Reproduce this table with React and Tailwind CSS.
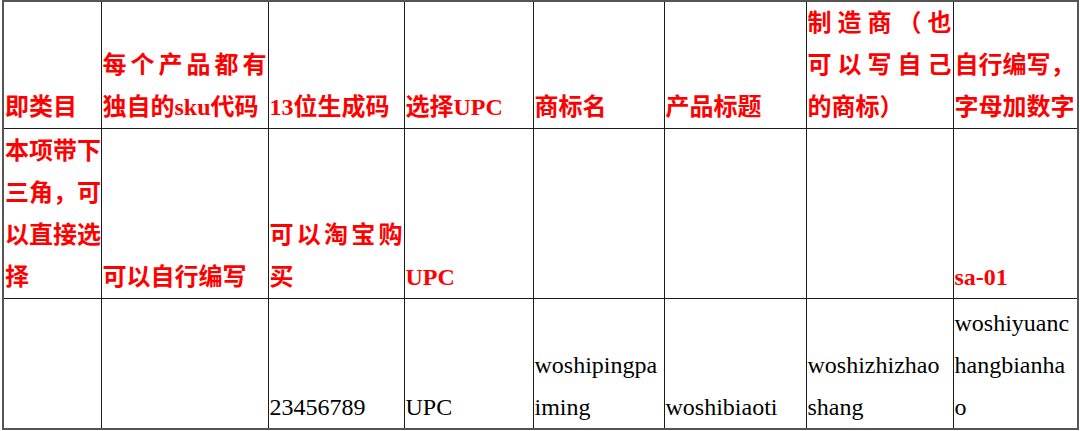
import React from 'react';

const FONT = "font-['Liberation_Serif','Noto_Sans_CJK_SC',serif]";

// one line of cell text; "spread" lines are justified edge to edge like the source doc
function Line({ children, spread = false }) {
  return (
    <div className={`whitespace-nowrap ${spread ? 'text-justify [text-align-last:justify]' : ''}`}>
      {children}
    </div>
  );
}

function Cell({ children, red = false }) {
  return (
    <td
      className={`border-[1.5px] border-[#1b1b1b] align-bottom p-0 pl-[1px] pr-[1px] overflow-hidden ${red ? 'text-[#ff0000] font-semibold' : 'text-black'}`}
    >
      {children}
    </td>
  );
}

export default function App() {
  return (
    <div className={`w-[1080px] h-[431px] bg-white ${FONT} text-[24px] leading-[42px]`}>
      <div className="pl-[2px]">
        <table className="table-fixed border-collapse border-2 border-[#555555] w-[1075px]">
          <colgroup>
            <col className="w-[98px]" />
            <col className="w-[167px]" />
            <col className="w-[136px]" />
            <col className="w-[129px]" />
            <col className="w-[131px]" />
            <col className="w-[142px]" />
            <col className="w-[147px]" />
            <col className="w-[125px]" />
          </colgroup>
          <tbody>
            <tr className="h-[127px]">
              <Cell red>
                <Line>即类目</Line>
              </Cell>
              <Cell red>
                <Line spread>每个产品都有</Line>
                <Line>独自的sku代码</Line>
              </Cell>
              <Cell red>
                <Line>13位生成码</Line>
              </Cell>
              <Cell red>
                <Line>选择UPC</Line>
              </Cell>
              <Cell red>
                <Line>商标名</Line>
              </Cell>
              <Cell red>
                <Line>产品标题</Line>
              </Cell>
              <Cell red>
                <Line spread>制造商（也</Line>
                <Line spread>可以写自己</Line>
                <Line>的商标）</Line>
              </Cell>
              <Cell red>
                <Line>自行编写，</Line>
                <Line>字母加数字</Line>
              </Cell>
            </tr>
            <tr className="h-[170px]">
              <Cell red>
                <Line spread>本项带下</Line>
                <Line spread>三角，可</Line>
                <Line spread>以直接选</Line>
                <Line>择</Line>
              </Cell>
              <Cell red>
                <Line>可以自行编写</Line>
              </Cell>
              <Cell red>
                <Line spread>可以淘宝购</Line>
                <Line>买</Line>
              </Cell>
              <Cell red>
                <Line>UPC</Line>
              </Cell>
              <Cell red />
              <Cell red />
              <Cell red />
              <Cell red>
                <Line>sa-01</Line>
              </Cell>
            </tr>
            <tr className="h-[130px]">
              <Cell />
              <Cell />
              <Cell>
                <Line>23456789</Line>
              </Cell>
              <Cell>
                <Line>UPC</Line>
              </Cell>
              <Cell>
                <Line>woshipingpa</Line>
                <Line>iming</Line>
              </Cell>
              <Cell>
                <Line>woshibiaoti</Line>
              </Cell>
              <Cell>
                <Line>woshizhizhao</Line>
                <Line>shang</Line>
              </Cell>
              <Cell>
                <Line>woshiyuanc</Line>
                <Line>hangbianha</Line>
                <Line>o</Line>
              </Cell>
            </tr>
          </tbody>
        </table>
      </div>
    </div>
  );
}
